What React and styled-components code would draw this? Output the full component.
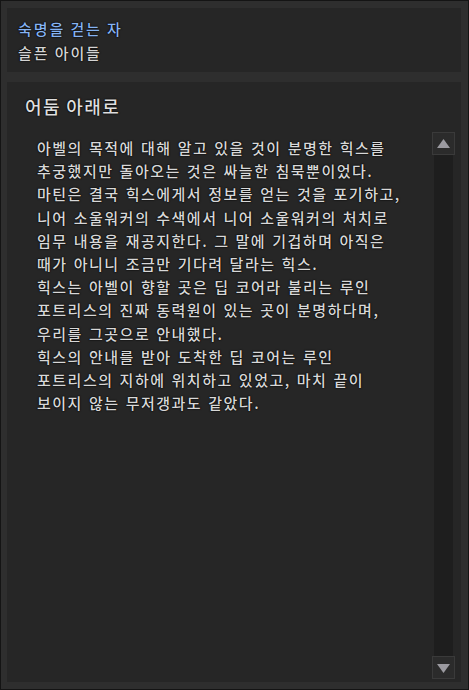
import React from "react";
import styled, { createGlobalStyle } from "styled-components";

const GlobalStyle = createGlobalStyle`
  html, body {
    margin: 0;
    padding: 0;
    background: #111;
  }
  * {
    box-sizing: border-box;
  }
`;

const Frame = styled.div`
  width: 469px;
  height: 690px;
  border: 1px solid #141414;
  background: #2e2e2e;
  padding: 7px 7px 7px 6px;
  display: flex;
  flex-direction: column;
  gap: 10px;
  font-family: "Noto Sans CJK KR", "Noto Sans", sans-serif;
  text-shadow: 0 0 2px #000, 0 0 1px #000;
`;

const Header = styled.div`
  height: 64px;
  background: #262626;
  padding: 10px 11px;
  display: flex;
  flex-direction: column;
  gap: 3px;
`;

const Line = styled.div`
  font-size: 15px;
  font-weight: 500;
  line-height: 21px;
  letter-spacing: 1.9px;
  color: ${(p) => p.$color};
`;

const Panel = styled.div`
  flex: 1;
  background: #262626;
  padding: 12px 6px 3px 18px;
  display: flex;
  flex-direction: column;
  min-height: 0;
`;

const Heading = styled.h2`
  margin: 0;
  font-size: 18px;
  font-weight: 500;
  line-height: 25px;
  letter-spacing: 1.4px;
  color: #dedede;
`;

const Body = styled.div`
  flex: 1;
  display: flex;
  margin-top: 13px;
  min-height: 0;
`;

const Text = styled.div`
  flex: 1;
  padding: 4px 0 0 12px;
  font-size: 15px;
  font-weight: 500;
  line-height: 23.2px;
  letter-spacing: 1.5px;
  word-spacing: 1.2px;
  color: #d8d8d8;
`;

const Para = styled.p`
  margin: 0;
  white-space: nowrap;
`;

const Scrollbar = styled.div`
  width: 23px;
  display: flex;
  flex-direction: column;
`;

const Arrow = styled.div`
  height: 23px;
  background: #2b2b2b;
  border: 1px solid #3a3a3a;
  display: flex;
  align-items: center;
  justify-content: center;
`;

const Track = styled.div`
  flex: 1;
  margin: 0 2px;
  background: #1e1e1e;
`;

const Triangle = ({ down }) => (
  <svg width="13" height="10" viewBox="0 0 13 10">
    <polygon
      points={down ? "0,1 13,1 6.5,10" : "6.5,0 13,9 0,9"}
      fill="#9b9aa0"
    />
  </svg>
);

const lines = [
  "아벨의 목적에 대해 알고 있을 것이 분명한 힉스를",
  "추궁했지만 돌아오는 것은 싸늘한 침묵뿐이었다.",
  "마틴은 결국 힉스에게서 정보를 얻는 것을 포기하고,",
  "니어 소울워커의 수색에서 니어 소울워커의 처치로",
  "임무 내용을 재공지한다. 그 말에 기겁하며 아직은",
  "때가 아니니 조금만 기다려 달라는 힉스.",
  "힉스는 아벨이 향할 곳은 딥 코어라 불리는 루인",
  "포트리스의 진짜 동력원이 있는 곳이 분명하다며,",
  "우리를 그곳으로 안내했다.",
  "힉스의 안내를 받아 도착한 딥 코어는 루인",
  "포트리스의 지하에 위치하고 있었고, 마치 끝이",
  "보이지 않는 무저갱과도 같았다.",
];

export default function App() {
  return (
    <>
      <GlobalStyle />
      <Frame>
        <Header>
          <Line $color="#86b3f2">숙명을 걷는 자</Line>
          <Line $color="#d4d4d4">슬픈 아이들</Line>
        </Header>
        <Panel>
          <Heading>어둠 아래로</Heading>
          <Body>
            <Text>
              {lines.map((l, i) => (
                <Para key={i}>{l}</Para>
              ))}
            </Text>
            <Scrollbar>
              <Arrow>
                <Triangle />
              </Arrow>
              <Track />
              <Arrow>
                <Triangle down />
              </Arrow>
            </Scrollbar>
          </Body>
        </Panel>
      </Frame>
    </>
  );
}
